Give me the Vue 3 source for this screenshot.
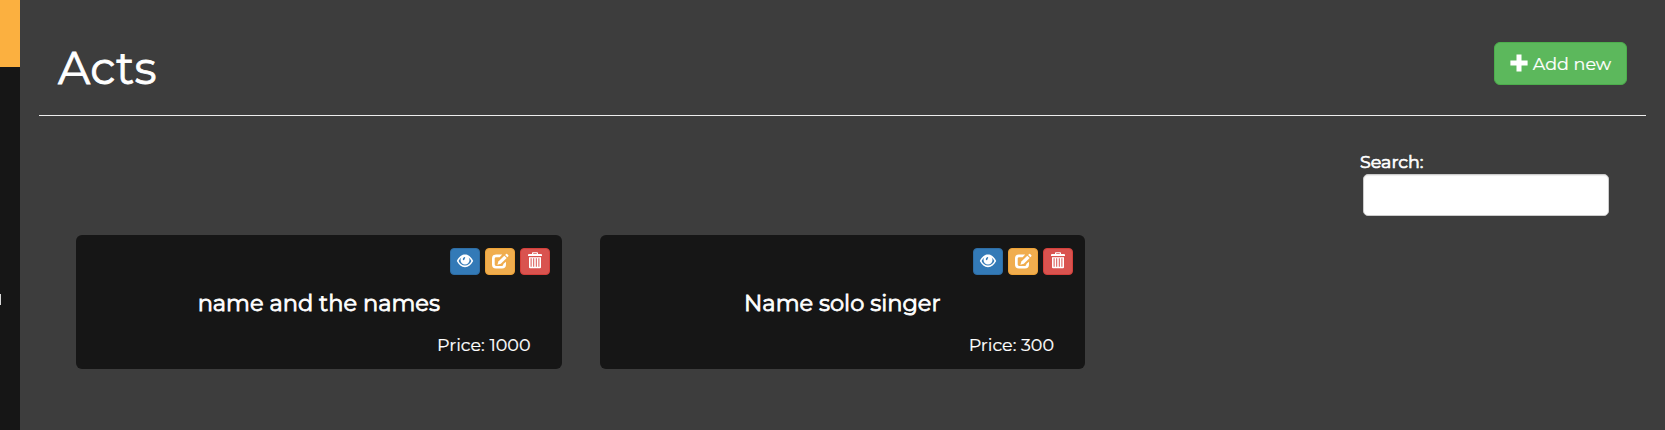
<template>
  <div class="page">
    <aside class="sidebar">
      <div class="sidebar-brand"></div>
      <div class="sidebar-mark"></div>
    </aside>
    <main class="content">
      <header class="header">
        <h1>Acts</h1>
        <button class="btn btn-add" type="button">
          <svg class="icon-plus" viewBox="0 0 18 18">
            <path d="M6.5 0.4h5v6.100h6.100v5h-6.100v6.100H6.500v-6.100H0.400V6.500h6.100z" />
          </svg>
          <span>Add new</span>
        </button>
      </header>
      <div class="search">
        <label for="search">Search:</label>
        <input id="search" v-model="search" type="text" />
      </div>
      <div class="acts">
        <div v-for="act in filteredActs" :key="act.id" class="act">
          <div class="actions">
            <button class="btn btn-view" type="button" aria-label="View">
              <svg viewBox="0 0 18 18">
                <path
                  fill-rule="evenodd"
                  d="M.8 9C2.800 5.200 5.500 2.600 9 2.600S15.200 5.200 17.200 9C15.200 12.800 12.500 15.200 9 15.200S2.800 12.800.8 9zM2.600 9C4 11.800 6.200 13.600 9 13.600S14 11.800 15.400 9C14.700 7.500 13.800 6.300 12.600 5.400 13.200 6.200 13.500 7.100 13.500 8.100A4.500 4.500 0 0 1 4.500 8.100C4.500 7.100 4.800 6.200 5.400 5.400 4.200 6.300 3.300 7.500 2.600 9zM8.900 5.100C8 5 6.700 6.300 6.800 7.600 6.900 8.600 8.300 8.500 8.400 7.500 8.500 6.600 9.800 6 8.900 5.100z"
                />
              </svg>
            </button>
            <button class="btn btn-edit" type="button" aria-label="Edit">
              <svg viewBox="0 0 18 18">
                <path
                  d="M11.200 2.500H5A4 4 0 0 0 1 6.500V12.500A4 4 0 0 0 5 16.500H11A4 4 0 0 0 15 12.500V9.700L12.300 12.100V12.500Q12.300 13.900 10.900 13.900H5.100Q3.700 13.900 3.700 12.500V6.600Q3.700 5.200 5.100 5.200H8.700z"
                />
                <path d="M13.300 3.700L15.700 6 9.800 11.800 6.400 12.800 7.400 9.400z" />
                <path d="M14.100 2.900L15.100 1.900Q15.600 1.500 16.100 2L17.300 3.200Q17.800 3.700 17.300 4.200L16.400 5.200z" />
              </svg>
            </button>
            <button class="btn btn-delete" type="button" aria-label="Delete">
              <svg viewBox="0 0 18 18">
                <path
                  fill-rule="evenodd"
                  d="M6 2V1Q6 .2 6.800.2H11.200Q12 .2 12 1V2H15Q16 2 16 3V4H2V3Q2 2 3 2zM7.200 2H10.800V1.300H7.200zM3 5.200H15V15.200Q15 16.300 13.900 16.300H4.100Q3 16.300 3 15.200zM4.600 6.200V14.700H5.600V6.200zM7.200 6.200V14.700H8.200V6.200zM9.800 6.200V14.700H10.800V6.200zM12.400 6.200V14.700H13.400V6.200z"
                />
              </svg>
            </button>
          </div>
          <h3>{{ act.name }}</h3>
          <p class="price">Price: {{ act.price }}</p>
        </div>
      </div>
    </main>
  </div>
</template>

<script setup>
import { computed, ref } from 'vue';

const search = ref('');
const acts = ref([
  { id: 1, name: 'name and the names', price: 1000 },
  { id: 2, name: 'Name solo singer', price: 300 },
]);

const filteredActs = computed(() =>
  acts.value.filter((act) => act.name.toLowerCase().includes(search.value.toLowerCase()))
);
</script>

<style>
body {
  background: #3d3d3d;
}
</style>

<style scoped>
* {
  box-sizing: border-box;
}

.page {
  display: flex;
  height: 430px;
  overflow: hidden;
  background: #3d3d3d;
  color: #fff;
  font-family: Montserrat, Inter, sans-serif;
  font-size: 17.5px;
}

.sidebar {
  flex: none;
  width: 20px;
  background: #161616;
}

.sidebar-brand {
  height: 67px;
  background: #fbb040;
}

/* edge of the clipped menu glyph */
.sidebar-mark {
  width: 1px;
  height: 11px;
  margin-top: 227px;
  background: #d8d8d8;
}

.content {
  flex: 1;
  padding: 0 19px;
}

.header {
  display: flex;
  justify-content: space-between;
  align-items: flex-start;
  height: 116px;
  padding: 42px 19px 0 19px;
  border-bottom: 1px solid #eee;
}

h1 {
  margin: 0;
  font-size: 45px;
  font-weight: 400;
  line-height: 51px;
  letter-spacing: 0.2px;
  -webkit-text-stroke: 0.8px #fff;
}

.btn {
  display: flex;
  align-items: center;
  justify-content: center;
  padding: 0;
  border: 1px solid;
  color: #fff;
  font: inherit;
  cursor: pointer;
}

.btn svg {
  fill: #fff;
}

.btn-add {
  gap: 5px;
  width: 133px;
  height: 43px;
  border-color: #4cae4c;
  border-radius: 6px;
  background: #5cb85c;
  font-size: 17.5px;
  -webkit-text-stroke: 0.2px #fff;
}

.btn-add .icon-plus {
  width: 18px;
  height: 18px;
  margin-top: -2px;
}

.search {
  display: flex;
  flex-direction: column;
  width: 249px;
  margin: 37px 37px 0 auto;
}

label {
  height: 21px;
  line-height: 17px;
  -webkit-text-stroke: 0.7px #fff;
}

input {
  width: 246px;
  height: 42px;
  margin-left: 3px;
  padding: 6px 12px;
  border: 1px solid #ccc;
  border-radius: 5px;
  background: #fff;
  box-shadow: inset 0 1px 1px rgba(0, 0, 0, 0.075);
  font: inherit;
}

.acts {
  display: grid;
  grid-template-columns: repeat(3, 485.5px);
  gap: 38px;
  padding: 19px 0 0 37px;
}

.act {
  height: 134px;
  padding: 13px 12px 0;
  border-radius: 6px;
  background: #161616;
}

.actions {
  display: flex;
  justify-content: flex-end;
  gap: 5px;
}

.actions .btn {
  width: 30px;
  height: 27px;
  border-radius: 4px;
}

.actions svg {
  width: 18px;
  height: 18px;
  margin-top: -2px;
}

.btn-view {
  border-color: #2e6da4;
  background: #337ab7;
}

.btn-edit {
  border-color: #eea236;
  background: #f0ad4e;
}

.btn-delete {
  border-color: #d43f3a;
  background: #d9534f;
}

h3 {
  margin: 14px 0 0;
  font-size: 22.5px;
  font-weight: 400;
  line-height: 28px;
  text-align: center;
  -webkit-text-stroke: 0.8px #fff;
}

.price {
  margin: 16px 19px 0 0;
  line-height: 24px;
  text-align: right;
  -webkit-text-stroke: 0.2px #fff;
}
</style>
